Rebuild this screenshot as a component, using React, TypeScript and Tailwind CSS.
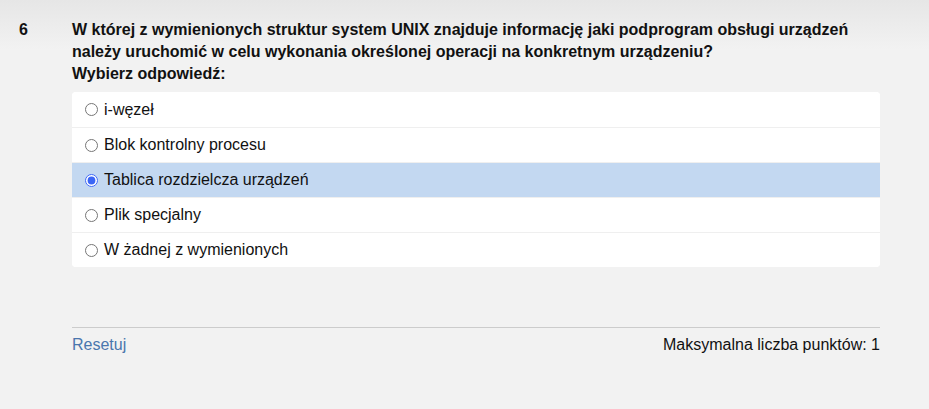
export default function App() {
  const answers = [
    "i-węzeł",
    "Blok kontrolny procesu",
    "Tablica rozdzielcza urządzeń",
    "Plik specjalny",
    "W żadnej z wymienionych",
  ];
  const selected = 2;

  return (
    <div className="min-h-[409px] w-full bg-[linear-gradient(to_bottom,#e6e6e6,#f2f2f2_50px)] font-['Liberation_Sans',Arial,sans-serif] text-[16px] text-[#111]">
      <div className="flex pt-[19px]">
        {/* question number */}
        <div className="w-[72px] shrink-0 pl-[19px] font-bold leading-[22px]">6</div>

        <div className="w-[808px]">
          <div className="font-bold leading-[22px]">
            W której z wymienionych struktur system UNIX znajduje informację jaki podprogram obsługi urządzeń
            <br />
            należy uruchomić w celu wykonania określonej operacji na konkretnym urządzeniu?
          </div>
          <div className="font-bold leading-[22px]">Wybierz odpowiedź:</div>

          {/* answers */}
          <div className="mt-[7px] overflow-hidden rounded-[4px] bg-white">
            {answers.map((a, i) => (
              <label
                key={a}
                className={
                  "flex h-[35px] items-center gap-[6px] pl-[13px] " +
                  (i > 0 ? "border-t border-[#efefef] " : "") +
                  (i === selected ? "bg-[#c3d8f1]" : "bg-white")
                }
              >
                <input
                  type="radio"
                  name="q6"
                  defaultChecked={i === selected}
                  className="m-0 h-[13px] w-[13px] accent-[#3b66f5]"
                />
                <span className="leading-[20px]">{a}</span>
              </label>
            ))}
          </div>

          {/* footer */}
          <div className="mt-[60px] flex items-center justify-between border-t border-[#cccccc] pt-[6px] leading-[22px]">
            <span className="text-[#4a76ad]">Resetuj</span>
            <span>Maksymalna liczba punktów: 1</span>
          </div>
        </div>
      </div>
    </div>
  );
}
